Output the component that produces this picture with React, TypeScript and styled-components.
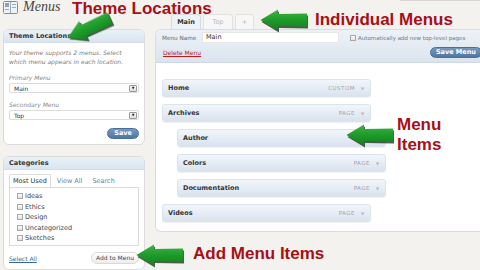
import styled, { createGlobalStyle } from "styled-components";

const categories = ["Ideas", "Ethics", "Design", "Uncategorized", "Sketches"];

const menuItems = [
  { title: "Home", type: "Custom", depth: 0 },
  { title: "Archives", type: "Page", depth: 0 },
  { title: "Author", type: "Page", depth: 1 },
  { title: "Colors", type: "Page", depth: 1 },
  { title: "Documentation", type: "Page", depth: 1 },
  { title: "Videos", type: "Page", depth: 0 },
];

// callouts drawn over the screenshot
const notes = [
  { text: "Theme Locations", x: 72, y: 0 },
  { text: "Individual Menus", x: 315, y: 11 },
  { text: "Menu", x: 397, y: 116 },
  { text: "Items", x: 397, y: 136 },
  { text: "Add Menu Items", x: 193, y: 245 },
];

const arrows = [
  { x: 65, y: 17, angle: -25 },
  { x: 260, y: 9, angle: 0 },
  { x: 346, y: 124, angle: 0 },
  { x: 136, y: 244, angle: 0 },
];

export default function App() {
  return (
    <Page>
      <GlobalStyle />
      <Header>
        <MenusIcon />
        <Title>Menus</Title>
        <ScreenMeta />
      </Header>

      <Columns>
        <LeftColumn>
          <Panel>
            <PanelTitle>Theme Locations</PanelTitle>
            <PanelBody>
              <Description>
                Your theme supports 2 menus. Select
                <br />
                which menu appears in each location.
              </Description>
              <FieldLabel>Primary Menu</FieldLabel>
              <Select>
                Main
                <SelectArrow>▼</SelectArrow>
              </Select>
              <FieldLabel>Secondary Menu</FieldLabel>
              <Select>
                Top
                <SelectArrow>▼</SelectArrow>
              </Select>
              <ButtonRow>
                <PrimaryButton>Save</PrimaryButton>
              </ButtonRow>
            </PanelBody>
          </Panel>

          <Panel>
            <PanelTitle>Categories</PanelTitle>
            <PanelBody>
              <Tabs>
                <Tab $active>Most Used</Tab>
                <Tab>View All</Tab>
                <Tab>Search</Tab>
              </Tabs>
              <TabPanel>
                {categories.map((name) => (
                  <CheckRow key={name}>
                    <Check />
                    {name}
                  </CheckRow>
                ))}
              </TabPanel>
              <Footer>
                <TextLink>Select All</TextLink>
                <SecondaryButton>Add to Menu</SecondaryButton>
              </Footer>
            </PanelBody>
          </Panel>
        </LeftColumn>

        <div>
          <MenuTabs>
            <MenuTab $active $width={30}>
              Main
            </MenuTab>
            <MenuTab $width={30}>Top</MenuTab>
            <MenuTab $width={19}>+</MenuTab>
          </MenuTabs>
          <MenuPanel>
            <MenuHeader>
              <HeaderRow>
                <NameLabel>Menu Name</NameLabel>
                <NameInput>Main</NameInput>
                <AutoAdd>
                  <Check />
                  Automatically add new top-level pages
                </AutoAdd>
              </HeaderRow>
              <HeaderRow>
                <DeleteLink>Delete Menu</DeleteLink>
                <SaveMenu>Save Menu</SaveMenu>
              </HeaderRow>
            </MenuHeader>
            <MenuBody>
              {menuItems.map((item) => (
                <MenuItem key={item.title} $depth={item.depth}>
                  <ItemTitle>{item.title}</ItemTitle>
                  <ItemType>{item.type}</ItemType>
                  <ItemToggle>▼</ItemToggle>
                </MenuItem>
              ))}
            </MenuBody>
          </MenuPanel>
        </div>
      </Columns>

      {notes.map((n) => (
        <Note key={n.text} $x={n.x} $y={n.y}>
          {n.text}
        </Note>
      ))}
      {arrows.map((a, i) => (
        <GreenArrow key={i} {...a} />
      ))}
    </Page>
  );
}

function MenusIcon() {
  return (
    <svg width="15" height="13" viewBox="0 0 15 13">
      <rect x="0.5" y="0.5" width="14" height="12" rx="1" fill="#eef2f6" stroke="#7d8fa5" />
      <rect x="2" y="2" width="4" height="4" fill="#8fa2b8" />
      <line x1="7.5" y1="1" x2="7.5" y2="12" stroke="#9aabbe" />
      <line x1="9" y1="3.5" x2="13" y2="3.5" stroke="#9aabbe" />
      <line x1="9" y1="6.5" x2="13" y2="6.5" stroke="#9aabbe" />
      <line x1="2" y1="8.5" x2="6" y2="8.5" stroke="#9aabbe" />
    </svg>
  );
}

function GreenArrow({ x, y, angle }: { x: number; y: number; angle: number }) {
  return (
    <ArrowSvg $x={x} $y={y} $angle={angle} width="48" height="22" viewBox="0 0 48 22">
      <defs>
        <linearGradient id="arrowFill" x1="0" y1="0" x2="0" y2="1">
          <stop offset="0" stopColor="#3fb443" />
          <stop offset="0.5" stopColor="#1d9b2a" />
          <stop offset="1" stopColor="#12801d" />
        </linearGradient>
      </defs>
      <path d="M0.5 11 L18 0.5 L18 5 L47 4.5 L47 17.5 L18 17 L18 21.5 Z" fill="url(#arrowFill)" />
    </ArrowSvg>
  );
}

const GlobalStyle = createGlobalStyle`
  *, *::before, *::after { box-sizing: border-box; }
  html, body {
    margin: 0;
    padding: 0;
    background: #f4f2ee;
  }
  body {
    font-family: "DejaVu Sans", Verdana, sans-serif;
  }
`;

const Page = styled.div`
  position: relative;
  width: 480px;
  height: 270px;
  overflow: hidden;
  background: #f4f2ee;
`;

const Header = styled.header`
  display: flex;
  align-items: center;
  gap: 5px;
  height: 14px;
  padding-left: 3px;
`;

const Title = styled.h1`
  margin: 0;
  font: italic 14px/14px "Liberation Serif", Georgia, serif;
  font-weight: normal;
  color: #464646;
`;

const ScreenMeta = styled.div`
  align-self: flex-start;
  margin-left: auto;
  width: 80px;
  height: 1px;
  background: #d6d6d6;
`;

const Columns = styled.div`
  display: grid;
  grid-template-columns: 142px 330px;
  column-gap: 10px;
  padding-left: 3px;
`;

const LeftColumn = styled.div`
  display: flex;
  flex-direction: column;
  gap: 11px;
  padding-top: 15px;
`;

const Panel = styled.section`
  background: #fff;
  border: 1px solid #dcdcdc;
  border-radius: 6px;
  overflow: hidden;
`;

const PanelTitle = styled.h3`
  margin: 0;
  height: 13px;
  padding-left: 5px;
  font-size: 6.5px;
  font-weight: bold;
  line-height: 13px;
  color: #333;
  background: linear-gradient(#eaf1f8, #d9e5f0);
  border-bottom: 1px solid #d3dde8;
`;

const PanelBody = styled.div`
  padding: 5px;
`;

const Description = styled.p`
  margin: 0;
  font-style: italic;
  font-size: 6px;
  line-height: 9px;
  color: #7a7a7a;
`;

const FieldLabel = styled.div`
  margin-top: 8px;
  font-style: italic;
  font-size: 6px;
  line-height: 8px;
  color: #888;
`;

const Select = styled.div`
  margin-top: 1px;
  height: 10px;
  display: flex;
  align-items: center;
  justify-content: space-between;
  padding: 0 1px 0 4px;
  border: 1px solid #dcdcdc;
  border-radius: 2px;
  font-size: 6px;
  color: #333;
`;

const SelectArrow = styled.span`
  display: flex;
  align-items: center;
  justify-content: center;
  width: 8px;
  height: 7px;
  border: 1px solid #999;
  border-radius: 1px;
  background: linear-gradient(#fff, #dcdcdc);
  font-size: 3.5px;
  color: #222;
`;

const ButtonRow = styled.div`
  display: flex;
  justify-content: flex-end;
  margin-top: 8px;
`;

const PrimaryButton = styled.button`
  height: 11px;
  padding: 0 6px;
  border: 1px solid #46709c;
  border-radius: 8px;
  background: linear-gradient(#7898be, #4f76a2);
  color: #fff;
  font: bold 6.5px/9px "DejaVu Sans", Verdana, sans-serif;
`;

const Tabs = styled.div`
  display: flex;
  margin-top: -1px;
  height: 13px;
`;

const Tab = styled.span<{ $active?: boolean }>`
  margin-right: 2px;
  padding: 0 3px;
  font-size: 6.5px;
  line-height: 12px;
  color: ${(p) => (p.$active ? "#333" : "#6b7f94")};
  background: ${(p) => (p.$active ? "#fff" : "transparent")};
  border: 1px solid ${(p) => (p.$active ? "#dcdcdc" : "transparent")};
  border-bottom: none;
  border-radius: 2px 2px 0 0;
`;

const TabPanel = styled.div`
  height: 59px;
  padding: 3px 7px;
  border: 1px solid #dcdcdc;
`;

const CheckRow = styled.label`
  display: flex;
  align-items: center;
  gap: 2px;
  height: 10.5px;
  font-size: 6.5px;
  color: #444;
`;

const Check = styled.span`
  flex: none;
  width: 6px;
  height: 6px;
  border: 1px solid #a8a8a8;
  background: linear-gradient(#fdfdfd, #e0e0e0);
`;

const Footer = styled.div`
  display: flex;
  align-items: center;
  justify-content: space-between;
  margin-top: 6px;
`;

const TextLink = styled.a`
  font-size: 6px;
  color: #3a6a92;
  text-decoration: underline;
`;

const SecondaryButton = styled.button`
  height: 12px;
  padding: 0 4px;
  border: 1px solid #d8d8d8;
  border-radius: 8px;
  background: linear-gradient(#fff, #ededed);
  color: #464646;
  font: 6px/10px "DejaVu Sans", Verdana, sans-serif;
`;

const MenuTabs = styled.div`
  display: flex;
  gap: 2px;
  height: 15px;
  padding-left: 16px;
`;

const MenuTab = styled.span<{ $active?: boolean; $width: number }>`
  width: ${(p) => p.$width}px;
  text-align: center;
  font-size: 6.5px;
  line-height: 14px;
  font-weight: ${(p) => (p.$active ? "bold" : "normal")};
  color: ${(p) => (p.$active ? "#333" : "#b8b8b8")};
  background: ${(p) => (p.$active ? "#edf2f7" : "#f7f7f7")};
  border: 1px solid ${(p) => (p.$active ? "#d3dbe4" : "#e2e2e2")};
  border-bottom: none;
  border-radius: 3px 3px 0 0;
`;

const MenuPanel = styled.section`
  width: 330px;
  height: 203px;
  background: #fff;
  border: 1px solid #d8dde3;
  border-right: none;
  border-radius: 6px 0 0 6px;
  overflow: hidden;
`;

const MenuHeader = styled.div`
  display: flex;
  flex-direction: column;
  gap: 4px;
  height: 33px;
  padding: 2px 3px 0 6px;
  background: linear-gradient(#edf2f7, #dbe4ee);
  border-bottom: 1px solid #cfd9e3;
`;

const HeaderRow = styled.div`
  display: flex;
  align-items: center;
  height: 11px;
`;

const NameLabel = styled.span`
  width: 40px;
  font-size: 5.7px;
  color: #666;
`;

const NameInput = styled.div`
  width: 137px;
  height: 11px;
  padding-left: 3px;
  background: #fff;
  border: 1px solid #e6e6e6;
  font-size: 6.5px;
  line-height: 9px;
  color: #333;
`;

const AutoAdd = styled.span`
  display: flex;
  align-items: center;
  gap: 2px;
  margin-left: 11px;
  font-size: 5.5px;
  color: #777;
`;

const DeleteLink = styled.a`
  margin-left: 1px;
  font-size: 6px;
  color: #bc1d1d;
  text-decoration: underline;
`;

const SaveMenu = styled(PrimaryButton)`
  margin-left: auto;
  padding: 0 5px;
`;

const MenuBody = styled.div`
  display: flex;
  flex-direction: column;
  gap: 7px;
  padding: 16px 6px 10px;
`;

const MenuItem = styled.div<{ $depth: number }>`
  display: flex;
  align-items: center;
  width: 209px;
  height: 18px;
  margin-left: ${(p) => p.$depth * 15}px;
  padding-left: 5px;
  border: 1px solid #dbe3ec;
  border-radius: 3px;
  background: linear-gradient(#f2f6fa, #d9e3ee);
  box-shadow: 0 1px 1px rgba(0, 0, 0, 0.06);
`;

const ItemTitle = styled.span`
  flex: 1;
  font-size: 6.5px;
  font-weight: bold;
  color: #333;
`;

const ItemType = styled.span`
  font-size: 5.5px;
  letter-spacing: 0.5px;
  text-transform: uppercase;
  color: #a3a3a3;
`;

const ItemToggle = styled.span`
  width: 15px;
  text-align: center;
  font-size: 4px;
  color: #b5b5b5;
`;

const Note = styled.div<{ $x: number; $y: number }>`
  position: absolute;
  left: ${(p) => p.$x}px;
  top: ${(p) => p.$y}px;
  font: bold 17px/17px "Liberation Sans", Arial, sans-serif;
  color: #a80f16;
  white-space: nowrap;
`;

const ArrowSvg = styled.svg<{ $x: number; $y: number; $angle: number }>`
  position: absolute;
  left: ${(p) => p.$x}px;
  top: ${(p) => p.$y}px;
  transform: rotate(${(p) => p.$angle}deg);
  overflow: visible;
  filter: drop-shadow(1.5px 2px 0.5px rgba(5, 30, 5, 0.7));
`;
